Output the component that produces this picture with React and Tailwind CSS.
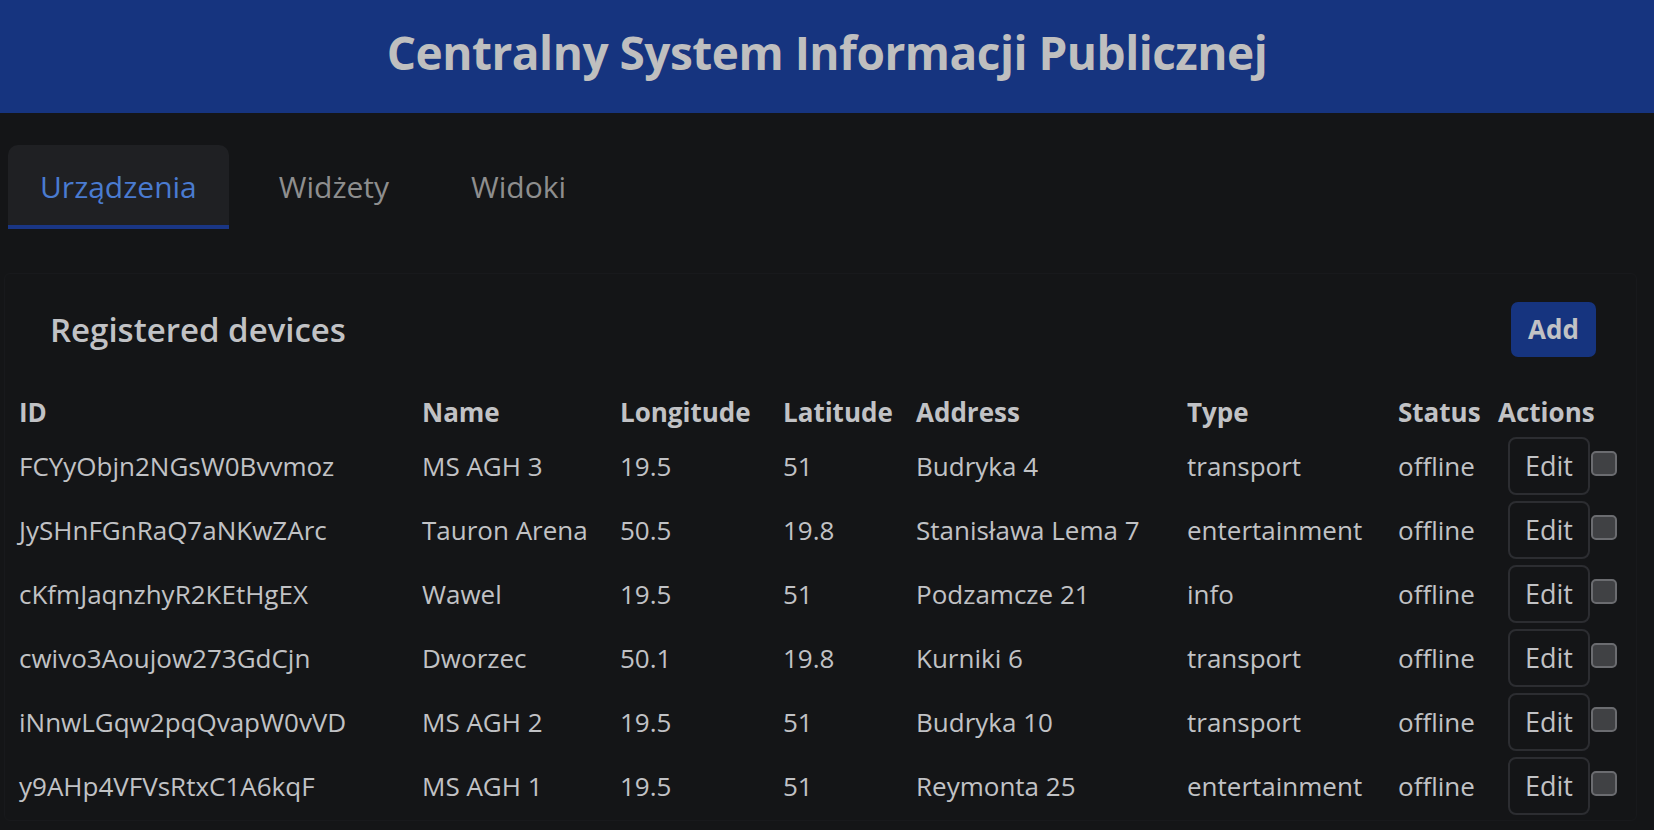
import React, { useState } from 'react';

const devices = [
  { id: 'FCYyObjn2NGsW0Bvvmoz', name: 'MS AGH 3', lon: '19.5', lat: '51', address: 'Budryka 4', type: 'transport', status: 'offline' },
  { id: 'JySHnFGnRaQ7aNKwZArc', name: 'Tauron Arena', lon: '50.5', lat: '19.8', address: 'Stanisława Lema 7', type: 'entertainment', status: 'offline' },
  { id: 'cKfmJaqnzhyR2KEtHgEX', name: 'Wawel', lon: '19.5', lat: '51', address: 'Podzamcze 21', type: 'info', status: 'offline' },
  { id: 'cwivo3Aoujow273GdCjn', name: 'Dworzec', lon: '50.1', lat: '19.8', address: 'Kurniki 6', type: 'transport', status: 'offline' },
  { id: 'iNnwLGqw2pqQvapW0vVD', name: 'MS AGH 2', lon: '19.5', lat: '51', address: 'Budryka 10', type: 'transport', status: 'offline' },
  { id: 'y9AHp4VFVsRtxC1A6kqF', name: 'MS AGH 1', lon: '19.5', lat: '51', address: 'Reymonta 25', type: 'entertainment', status: 'offline' },
];

const tabs = ['Urządzenia', 'Widżety', 'Widoki'];

export default function App() {
  const [activeTab, setActiveTab] = useState('Urządzenia');

  return (
    <div className="min-h-screen bg-[#141517] text-[#c1c2c5] font-['Open_Sans','Noto_Sans',sans-serif]">
      {/* Top bar */}
      <header className="h-[113px] bg-[#16347f] flex items-center justify-center pb-[8px]">
        <h1 className="text-[46px] font-bold text-[#bfbfbf] tracking-[-0.5px]">Centralny System Informacji Publicznej</h1>
      </header>

      {/* Tabs */}
      <nav className="flex gap-[18px] px-[8px] pt-[32px]">
        {tabs.map((tab) => (
          <button
            key={tab}
            onClick={() => setActiveTab(tab)}
            className={`h-[84px] px-[32px] pt-[2px] text-[30px] rounded-t-[10px] border-b-[4px] ${
              activeTab === tab
                ? 'bg-[#1f2023] text-[#4a7bd0] border-[#1a3685]'
                : 'text-[#8e8e8e] border-transparent'
            }`}
          >
            {tab}
          </button>
        ))}
      </nav>

      {/* Devices card */}
      <section className="mt-[44px] ml-[4px] mr-[17px] border border-[#18191c] rounded-[6px] pb-[2px]">
        <div className="flex items-center justify-between pl-[45px] pr-[40px] pt-[28px]">
          <h2 className="text-[33px] font-semibold">Registered devices</h2>
          <button className="h-[55px] w-[85px] rounded-[7px] bg-[#16347f] text-[26px] font-bold text-[#c1c2c5]">
            Add
          </button>
        </div>

        <table className="mt-[33px] ml-[14px] table-fixed text-left text-[26px]">
          <colgroup>
            <col className="w-[403px]" />
            <col className="w-[198px]" />
            <col className="w-[163px]" />
            <col className="w-[133px]" />
            <col className="w-[271px]" />
            <col className="w-[211px]" />
            <col className="w-[100px]" />
            <col className="w-[130px]" />
          </colgroup>
          <thead>
            <tr className="h-[44px] font-bold">
              <th>ID</th>
              <th>Name</th>
              <th>Longitude</th>
              <th>Latitude</th>
              <th>Address</th>
              <th>Type</th>
              <th>Status</th>
              <th>Actions</th>
            </tr>
          </thead>
          <tbody>
            {devices.map((d) => (
              <tr key={d.id} className="h-[64px]">
                <td className="whitespace-nowrap">{d.id}</td>
                <td className="whitespace-nowrap">{d.name}</td>
                <td>{d.lon}</td>
                <td>{d.lat}</td>
                <td className="whitespace-nowrap">{d.address}</td>
                <td>{d.type}</td>
                <td>{d.status}</td>
                <td>
                  <div className="flex items-start pl-[10px]">
                    <button className="h-[58px] w-[82px] rounded-[8px] border-2 border-[#2c2d31] text-[27px] text-[#c1c2c5]">
                      Edit
                    </button>
                    <span className="mt-[14px] ml-[1px] h-[25px] w-[26px] rounded-[5px] border-2 border-[#6b6c70] bg-[#404144]" />
                  </div>
                </td>
              </tr>
            ))}
          </tbody>
        </table>
      </section>
    </div>
  );
}
